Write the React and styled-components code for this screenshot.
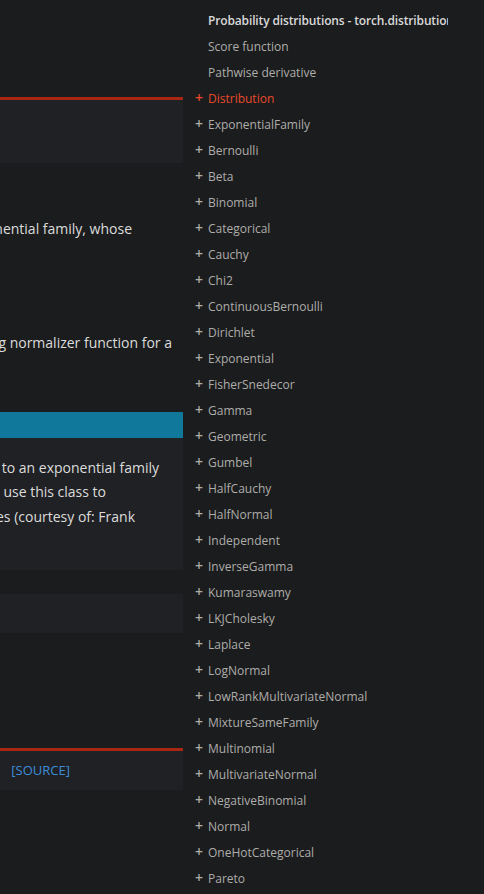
import React from "react";
import styled, { createGlobalStyle } from "styled-components";

const GlobalStyle = createGlobalStyle`
  html, body {
    margin: 0;
    padding: 0;
    background: #1b1c1e;
  }
  body {
    font-family: "Open Sans", "Noto Sans", sans-serif;
    color: #dcdcdc;
  }
`;

const Page = styled.div`
  display: grid;
  grid-template-columns: 183px 265px;
  width: 484px;
  height: 894px;
  overflow: hidden;
  background: #1b1c1e;
`;

const Article = styled.main`
  display: flex;
  flex-direction: column;
  overflow: hidden;
  padding-top: 97px;
`;

const Signature = styled.div`
  box-sizing: border-box;
  border-top: 3px solid #a92712;
  background: #202124;
  height: ${({ $h }) => $h}px;
  display: flex;
  flex-direction: column;
  justify-content: center;
  margin-top: ${({ $top }) => $top || 0}px;
`;

const MethodBox = styled.div`
  background: #202124;
  height: 39px;
  margin-top: 24px;
`;

/* a line whose start is cut off by the column edge */
const Line = styled.div`
  display: flex;
  justify-content: flex-end;
  align-items: center;
  white-space: nowrap;
  font-size: 14px;
  line-height: 24.5px;
  padding-right: ${({ $trail }) => $trail}px;
  margin-top: ${({ $top }) => $top || 0}px;

  & > span {
    flex-shrink: 0;
  }
`;

const Source = styled.span`
  color: #3c8ddb;
  font-size: 13px;
  margin-left: 14px;
`;

const Note = styled.div`
  background: #202124;
  margin-top: 56px;
  padding-bottom: 41px;
`;

const NoteTitle = styled.div`
  background: #10789a;
  height: 26px;
  margin-bottom: 18px;
`;

const Sidebar = styled.nav`
  overflow: hidden;
  padding-top: 7px;
`;

const TocList = styled.ul`
  list-style: none;
  margin: 0;
  padding: 0;
`;

const TocItem = styled.li`
  display: flex;
  align-items: center;
  height: 26px;
  white-space: nowrap;
  font-size: 12px;
  color: ${({ $active, $title }) =>
    $active ? "#e84a2a" : $title ? "#d9d9d9" : "#aeadaa"};
  font-weight: ${({ $title }) => ($title ? 600 : 400)};
  letter-spacing: ${({ $title }) => ($title ? "-0.14px" : "normal")};
`;

const Marker = styled.span`
  flex-shrink: 0;
  width: 25px;
  padding-right: 5px;
  box-sizing: border-box;
  text-align: right;
  font-size: 14px;
  font-weight: 600;
  line-height: 1;
`;

const classes = [
  "Distribution",
  "ExponentialFamily",
  "Bernoulli",
  "Beta",
  "Binomial",
  "Categorical",
  "Cauchy",
  "Chi2",
  "ContinuousBernoulli",
  "Dirichlet",
  "Exponential",
  "FisherSnedecor",
  "Gamma",
  "Geometric",
  "Gumbel",
  "HalfCauchy",
  "HalfNormal",
  "Independent",
  "InverseGamma",
  "Kumaraswamy",
  "LKJCholesky",
  "Laplace",
  "LogNormal",
  "LowRankMultivariateNormal",
  "MixtureSameFamily",
  "Multinomial",
  "MultivariateNormal",
  "NegativeBinomial",
  "Normal",
  "OneHotCategorical",
  "Pareto",
];

export default function App() {
  return (
    <>
      <GlobalStyle />
      <Page>
        <Article>
          <Signature $h={66} />

          <Line $top={54} $trail={51}>
            <span>
              ExponentialFamily is the abstract base class for probability
              distributions belonging to an exponential family, whose
            </span>
          </Line>

          <Line $top={89.5} $trail={11}>
            <span>
              t(x) denotes the sufficient statistic, F(θ) is the log normalizer function for a
            </span>
          </Line>

          <Note>
            <NoteTitle />
            <Line $trail={24}>
              <span>
                distributions which belonging to an exponential family
              </span>
            </Line>
            <Line $trail={77}>
              <span>and analytic KL divergence methods. We use this class to</span>
            </Line>
            <Line $trail={48}>
              <span>framework and Bregman divergences (courtesy of: Frank</span>
            </Line>
          </Note>

          <MethodBox />

          <Signature $h={42} $top={115}>
            <Line $trail={113}>
              <span>
                class torch.distributions.bernoulli.Bernoulli(probs=None,
                logits=None, validate_args=None)
              </span>
              <Source>[SOURCE]</Source>
            </Line>
          </Signature>
        </Article>

        <Sidebar>
          <TocList>
            <TocItem $title>
              <Marker />
              Probability distributions - torch.distributions
            </TocItem>
            <TocItem>
              <Marker />
              Score function
            </TocItem>
            <TocItem>
              <Marker />
              Pathwise derivative
            </TocItem>
            {classes.map((name, i) => (
              <TocItem key={name} $active={i === 0}>
                <Marker>+</Marker>
                {name}
              </TocItem>
            ))}
          </TocList>
        </Sidebar>
      </Page>
    </>
  );
}
